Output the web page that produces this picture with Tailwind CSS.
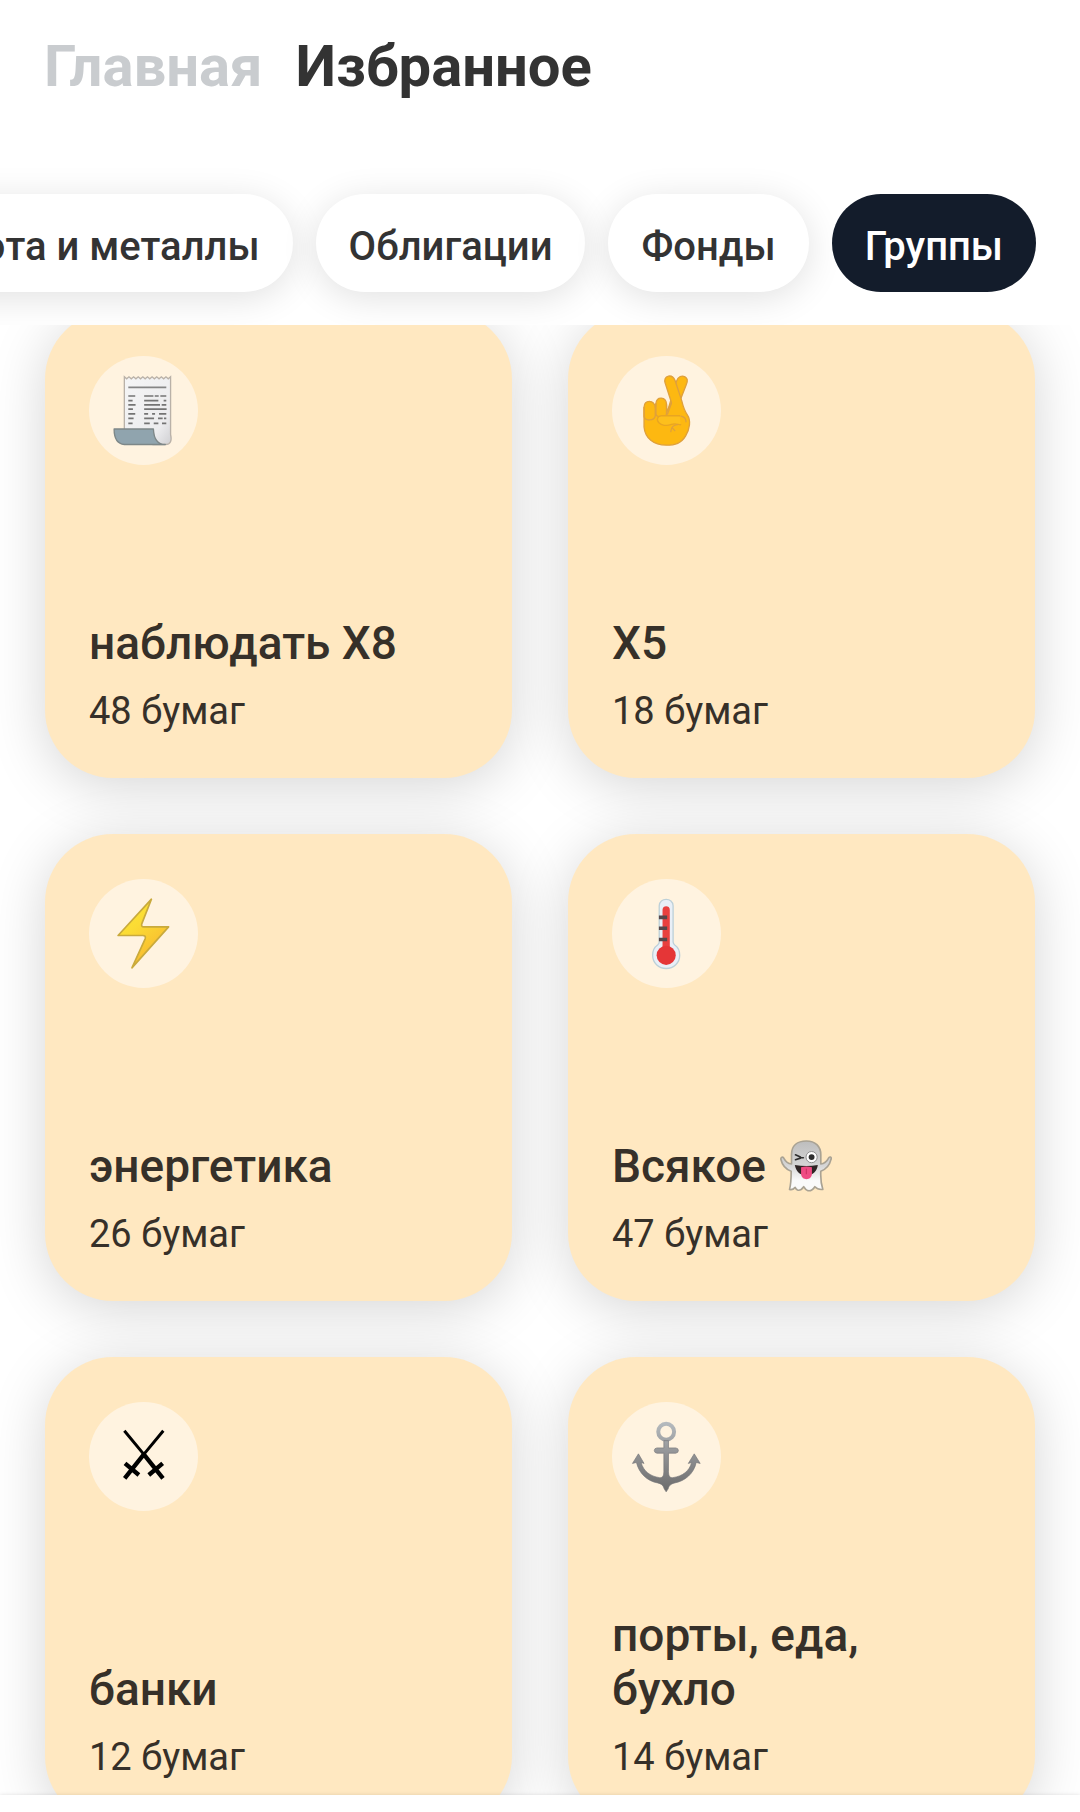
<!DOCTYPE html>
<html lang="ru">
<head>
  <meta charset="UTF-8">
  <meta name="viewport" content="width=device-width, initial-scale=1.0">
  <title>Избранное</title>
  <script src="https://cdn.jsdelivr.net/npm/@tailwindcss/browser@4"></script>
</head>
<body class="h-screen flex flex-col overflow-hidden bg-white font-['Roboto',sans-serif] text-[#333333]">

<!-- Header -->
<header class="shrink-0 pt-[32px]">
  <nav class="flex gap-[33px] px-[44px] text-[58px] leading-[68px] font-bold">
    <a href="#" class="text-[#c9cccf]">Главная</a>
    <a href="#" aria-current="page">Избранное</a>
  </nav>

  <!-- Filter chips, scrolled to the end -->
  <div class="mt-[34px] pt-[60px] pb-[33px] px-[44px] flex justify-end gap-[23px] overflow-hidden text-[40px] leading-[47px] font-medium whitespace-nowrap">
    <button class="shrink-0 rounded-full bg-white px-[33px] pt-[29px] pb-[22px] shadow-[0_6px_36px_rgba(0,0,0,0.12)]">Валюта и металлы</button>
    <button class="shrink-0 rounded-full bg-white px-[33px] pt-[29px] pb-[22px] shadow-[0_6px_36px_rgba(0,0,0,0.12)]">Облигации</button>
    <button class="shrink-0 rounded-full bg-white px-[33px] pt-[29px] pb-[22px] shadow-[0_6px_36px_rgba(0,0,0,0.12)]">Фонды</button>
    <button class="shrink-0 rounded-full bg-[#131c2b] px-[33px] pt-[29px] pb-[22px] text-white">Группы</button>
  </div>
</header>

<!-- Groups -->
<main class="flex-1 min-h-0 overflow-hidden">
  <div class="-mt-[14px] px-[45px] grid grid-cols-2 gap-[56px] text-[#363029]">

    <a href="#" class="aspect-square flex flex-col rounded-[68px] bg-[#ffe8c1] px-[44px] pt-[45px] pb-[44px] shadow-[0_8px_56px_rgba(0,0,0,0.17)]">
      <span class="size-[109px] rounded-full bg-[#fff3e0]">
        <svg viewBox="27 31 330 330" class="size-full" fill="none">
          <defs>
            <linearGradient id="paper" x1="0" y1="0" x2="1" y2="1"><stop offset="0" stop-color="#f5f5f5"/><stop offset=".75" stop-color="#ececee"/><stop offset="1" stop-color="#cfcfd2"/></linearGradient>
          </defs>
          <path d="M134 255V94l7 6 7-6 7 6 7-6 7 6 7-6 7 6 7-6 7 6 7-6 7 6 7-6 7 6 7-6 7 6 7-6 7 6 7-6 7 6 7-6V268Q281 299 258 299H220L180 255Z" fill="url(#paper)" stroke="#b9b1a8" stroke-width="4"/>
          <path d="M103 252H222C223 278 232 299 258 299H134C112 297 103 280 103 252Z" fill="#90a4ae" stroke="#7d8788" stroke-width="4" stroke-linejoin="round"/>
          <path d="M146 126H261" stroke="#858585" stroke-width="5"/>
          <path d="M146 152h21M146 166h13M146 179h22M146 192h14M146 206h21M146 220h16M146 235h13M194 152h28M226 152h12M243 152h18M194 166h43M253 166h8M194 179h48M247 179h14M194 192h68M194 206h12M218 206h9M239 206h22M194 220h30M236 220h14M254 220h7M194 235h17M223 235h14M248 235h13" stroke="#747474" stroke-width="5"/>
        </svg>
      </span>
      <span class="mt-auto text-[46px] leading-[54px] font-medium">наблюдать Х8</span>
      <span class="mt-[19px] text-[38px] leading-[45px]">48 бумаг</span>
    </a>

    <a href="#" class="aspect-square flex flex-col rounded-[68px] bg-[#ffe8c1] px-[44px] pt-[45px] pb-[44px] shadow-[0_8px_56px_rgba(0,0,0,0.17)]">
      <span class="size-[109px] rounded-full bg-[#fff3e0]">
        <svg viewBox="30 31 330 330" class="size-full" fill="#fdb811" stroke="#dfa03c" stroke-width="4" stroke-linecap="round" stroke-linejoin="round">
          <path d="M196 206L225 108C230 92 242 89 251 94C260 99 259 108 255 117L232 176L222 214Z"/>
          <path d="M127 186C127 162 158 162 161 187L163 174C166 152 193 154 195 176L196 200L210 172L191 113C188 102 191 94 201 92C211 90 217 96 221 105L241 166C246 187 249 196 258 209C270 226 265 253 253 273C240 295 222 301 194 301C156 301 130 280 127 246Z"/>
          <path d="M127 187V214C129 229 158 228 161 212V187M163 176V207C167 220 190 217 195 208V178M210 174L198 207" fill="none"/>
          <path d="M235 212H181C168 211 163 224 172 233C179 241 195 244 210 238C223 233 232 240 238 239" fill="#fdbf1c" stroke="#e9a521"/>
          <path d="M228 239C216 240 209 249 208 260M214 250L220 257M239 213C249 215 254 222 254 230" fill="none"/>
        </svg>
      </span>
      <span class="mt-auto text-[46px] leading-[54px] font-medium">Х5</span>
      <span class="mt-[19px] text-[38px] leading-[45px]">18 бумаг</span>
    </a>

    <a href="#" class="aspect-square flex flex-col rounded-[68px] bg-[#ffe8c1] px-[44px] pt-[45px] pb-[44px] shadow-[0_8px_56px_rgba(0,0,0,0.17)]">
      <span class="size-[109px] rounded-full bg-[#fff3e0]">
        <svg viewBox="27 31 330 330" class="size-full">
          <defs>
            <linearGradient id="bolt" x1="0" y1="0" x2=".6" y2="1"><stop offset="0" stop-color="#fdea3a"/><stop offset=".45" stop-color="#fbdb34"/><stop offset="1" stop-color="#f8b52f"/></linearGradient>
          </defs>
          <path d="M216 92L115 202H190Q200 202 197 212L157 300L268 176H193Q184 176 187 166Z" fill="url(#bolt)" stroke="#c9aa3d" stroke-width="5" stroke-linejoin="round"/>
        </svg>
      </span>
      <span class="mt-auto text-[46px] leading-[54px] font-medium">энергетика</span>
      <span class="mt-[19px] text-[38px] leading-[45px]">26 бумаг</span>
    </a>

    <a href="#" class="aspect-square flex flex-col rounded-[68px] bg-[#ffe8c1] px-[44px] pt-[45px] pb-[44px] shadow-[0_8px_56px_rgba(0,0,0,0.17)]">
      <span class="size-[109px] rounded-full bg-[#fff3e0]">
        <svg viewBox="30 31 330 330" class="size-full">
          <path d="M173 112C173 86 215 86 215 112V222Q215 227 220 231C230 238 235 249 235 262C235 285 217 302 194 302S153 285 153 262C153 249 158 238 168 231Q173 227 173 222Z" fill="#e9eff7" stroke="#bdd0d8" stroke-width="4"/>
          <path d="M183 124C183 110 205 110 205 124V237H183Z" fill="#e9403f"/>
          <circle cx="194" cy="262" r="29" fill="#e53637"/>
          <path d="M172 147h25M172 180h25M172 214h25" stroke="#56474b" stroke-width="11"/>
        </svg>
      </span>
      <span class="mt-auto flex items-center gap-[14px] text-[46px] leading-[54px] font-medium">Всякое
        <svg viewBox="45 43 158 158" class="size-[52px]">
          <defs>
            <linearGradient id="ghost" x1="0" y1="0" x2="0" y2="1"><stop offset="0" stop-color="#bdbdbd"/><stop offset=".5" stop-color="#d6d6d6"/><stop offset=".8" stop-color="#fafafa"/></linearGradient>
          </defs>
          <path d="M80 87C80 60 98 46 125 46S169 62 169 88V116C178 115 187 109 192 99C195 92 203 94 200 102C196 119 185 132 169 138C168 157 169 174 175 193Q160 195 151 185Q142 199 130 197Q123 195 117 185Q108 198 98 195Q93 192 91 187Q83 196 74 193C79 174 79 157 79 138C63 132 52 120 48 103C46 95 54 92 57 99C62 109 70 115 80 116Z" fill="url(#ghost)" stroke="#a9a293" stroke-width="5" stroke-linejoin="round"/>
          <circle cx="141" cy="95" r="17" fill="#fff" stroke="#8d8d8d" stroke-width="3"/>
          <circle cx="141" cy="95" r="9" fill="#2f2f2f"/>
          <path d="M92 88L107 95M92 103L107 98M106 97H116" stroke="#2f2f2f" stroke-width="5" stroke-linecap="round"/>
          <path d="M90 119Q125 125 160 119C157 139 146 150 125 150S94 139 90 119Z" fill="#2f2525"/>
          <path d="M109 126Q125 121 142 126V145C142 168 109 168 109 145Z" fill="#ef4b83"/>
          <path d="M125 130V147" stroke="#c92f60" stroke-width="3"/>
        </svg>
      </span>
      <span class="mt-[19px] text-[38px] leading-[45px]">47 бумаг</span>
    </a>

    <a href="#" class="aspect-square flex flex-col rounded-[68px] bg-[#ffe8c1] px-[44px] pt-[45px] pb-[44px] shadow-[0_8px_56px_rgba(0,0,0,0.17)]">
      <span class="size-[109px] rounded-full bg-[#fff3e0]">
        <svg viewBox="27 31 330 330" class="size-full" fill="none" stroke="#000">
          <path d="M134 118L195 192M252 118L191 192" stroke-width="9"/>
          <path d="M190 186L251 262M196 186L135 262M136 217L178 252M250 217L208 252" stroke-width="13"/>
        </svg>
      </span>
      <span class="mt-auto text-[46px] leading-[54px] font-medium">банки</span>
      <span class="mt-[19px] text-[38px] leading-[45px]">12 бумаг</span>
    </a>

    <a href="#" class="aspect-square flex flex-col rounded-[68px] bg-[#ffe8c1] px-[44px] pt-[45px] pb-[44px] shadow-[0_8px_56px_rgba(0,0,0,0.17)]">
      <span class="size-[109px] rounded-full bg-[#fff3e0]">
        <svg viewBox="30 31 330 330" class="size-full">
          <defs>
            <linearGradient id="steel" gradientUnits="userSpaceOnUse" x1="0" y1="90" x2="0" y2="302"><stop offset="0" stop-color="#b7bcc0"/><stop offset=".5" stop-color="#8f9092"/><stop offset="1" stop-color="#6b6b6b"/></linearGradient>
          </defs>
          <circle cx="194" cy="121" r="24" fill="none" stroke="url(#steel)" stroke-width="12"/>
          <path d="M187 148H201V170H223Q231 171 231 178T223 186H201V241C201 255 205 261 214 260C243 256 265 240 271 214L261 217L279 188L297 217L285 214C278 247 252 270 220 276C207 279 202 285 200 294L194 303L188 294C186 285 181 279 168 276C136 270 112 247 104 214L92 217L110 188L127 217L118 214C125 240 145 256 174 260C183 261 187 255 187 241V186H166Q158 185 158 178T166 170H187Z" fill="url(#steel)" stroke="#77777a" stroke-width="2" stroke-linejoin="round"/>
        </svg>
      </span>
      <span class="mt-auto text-[46px] leading-[54px] font-medium">порты, еда, бухло</span>
      <span class="mt-[19px] text-[38px] leading-[45px]">14 бумаг</span>
    </a>

  </div>
</main>

<!-- Top edge of the bottom bar -->
<footer class="relative shrink-0 h-[17px] bg-white shadow-[0_0_4px_rgba(0,0,0,0.12)]"></footer>

</body>
</html>
